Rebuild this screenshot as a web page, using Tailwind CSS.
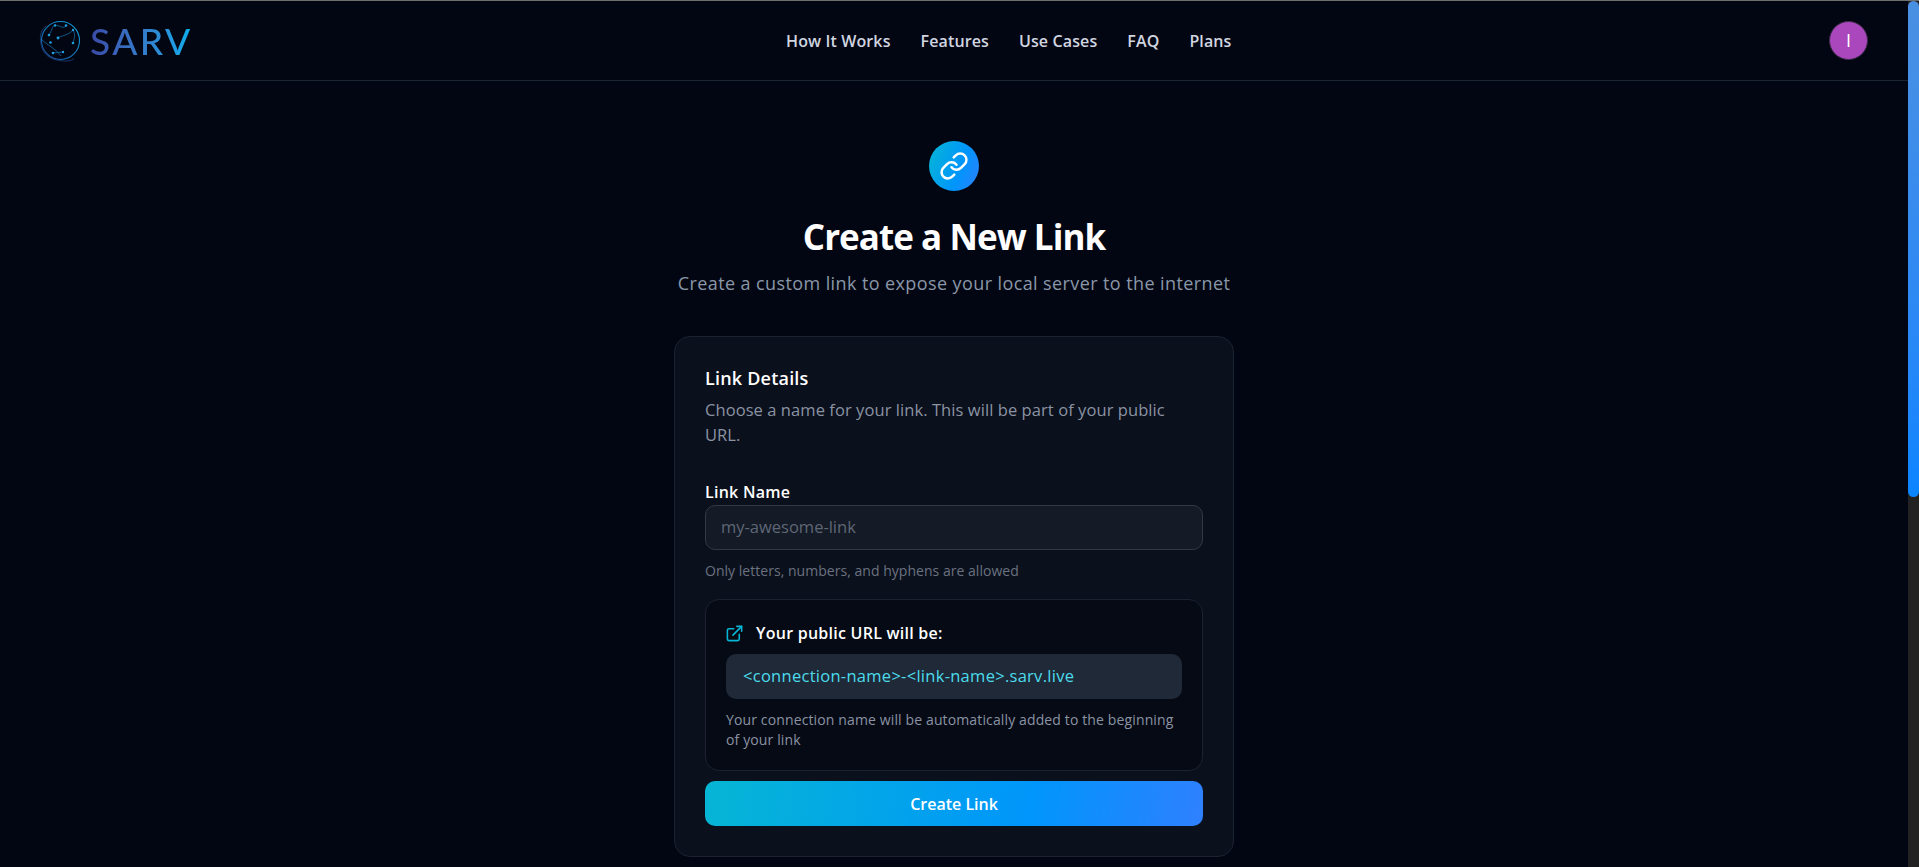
<!DOCTYPE html>
<html lang="en">
<head>
<meta charset="utf-8">
<title>SARV</title>
<script src="https://cdn.jsdelivr.net/npm/@tailwindcss/browser@4"></script>
</head>
<body class="m-0 bg-[#020612] overflow-hidden">
<div class="h-[867px] w-[1919px] flex flex-col overflow-hidden font-['Open_Sans','Noto_Sans',sans-serif]">
  <div class="h-px bg-[#6f6f6f] shrink-0"></div>
  <div class="flex flex-1 min-h-0">
    <div class="flex-1 min-w-0 flex flex-col">
      <header class="h-[80px] shrink-0 border-b border-[#1b2433] flex items-center justify-between pl-[40px] pr-[40px] relative">
        <a class="flex items-center gap-[9px]">
          <svg class="w-[42px] h-[42px] -ml-px" viewBox="0 0 42 42" fill="none">
            <defs><linearGradient id="g" x1="0" y1="1" x2="1" y2="0"><stop offset="0" stop-color="#1d4f9c"/><stop offset="1" stop-color="#0ea5e0"/></linearGradient></defs>
            <circle cx="21.5" cy="20.5" r="19" stroke="url(#g)" stroke-width="1.1"/>
            <path d="M7 6C1 10 0 18 3 28c3 9 12 13 24 13 6 0 9-2 7-3" stroke="#1d3f78" stroke-width=".8"/>
            <path d="M2 19c6 6 14 9 20 17M19 18c5-3 11-3 15-8M34 10c3 5 1 9 0 13M16 5c6 1 8 4 11 1M10 15c3-4 3-9 6-10M14 33l10-1" stroke="#1678b8" stroke-width=".7"/>
            <g fill="#1e9fe0">
              <circle cx="10" cy="15" r="1.3"/><circle cx="16" cy="5.5" r="1.2"/><circle cx="27" cy="5.5" r="1.3"/><circle cx="34" cy="10" r="1.2"/>
              <circle cx="19" cy="18" r="1.4"/><circle cx="11.500" cy="22.500" r="1.3"/><circle cx="34" cy="23" r="1.3"/><circle cx="14" cy="33" r="1.3"/><circle cx="24" cy="32" r="1.200"/>
            </g>
          </svg>
          <span class="font-['Lato',sans-serif] font-medium text-[37px] leading-none tracking-[2.5px] text-transparent bg-clip-text bg-gradient-to-r from-[#3a4aa6] to-[#00aeef]">SARV</span>
        </a>
        <nav class="absolute left-[786px] top-0 h-full flex items-center gap-[30px] text-[16px] leading-6 font-semibold text-[#d1d5e0] tracking-[0.12px] whitespace-nowrap">
          <a>How It Works</a><a>Features</a><a>Use Cases</a><a>FAQ</a><a>Plans</a>
        </nav>
        <div class="w-[39px] h-[39px] rounded-full bg-[#ab47bc] border border-[#3b2a4a] text-white flex items-center justify-center text-[18px]">I</div>
      </header>

      <main class="flex flex-col items-center">
        <div class="mt-[60px] w-[50px] h-[50px] rounded-full bg-[linear-gradient(110deg,#06b6d4,#0096fb_60%,#2f80ff)] flex items-center justify-center text-white">
          <svg class="w-[30px] h-[30px]" viewBox="0 0 24 24" fill="none" stroke="currentColor" stroke-width="2" stroke-linecap="round" stroke-linejoin="round"><path d="M10 13a5 5 0 0 0 7.540.54l3-3a5 5 0 0 0-7.070-7.070l-1.720 1.710"/><path d="M14 11a5 5 0 0 0-7.540-.54l-3 3a5 5 0 0 0 7.070 7.070l1.710-1.710"/></svg>
        </div>
        <h1 class="mt-[24px] text-[35px] leading-[44px] font-bold text-white tracking-[-0.95px] whitespace-nowrap">Create a New Link</h1>
        <p class="mt-[10px] text-[18px] leading-[28px] text-[#8a97a8] whitespace-nowrap tracking-[0.4px]">Create a custom link to expose your local server to the internet</p>

        <section class="mt-[39px] w-[560px] h-[521px] rounded-[16px] border border-[#1b2230] bg-[#0a101c] px-[30px] pt-[28px] flex flex-col">
          <h2 class="text-[18px] leading-[26px] font-semibold text-white tracking-[0.2px]">Link Details</h2>
          <p class="mt-[6px] text-[16.500px] leading-[25px] text-[#8b93a3] tracking-[0.07px]">Choose a name for your link. This will be part of your public<br>URL.</p>
          <label class="mt-[33px] text-[16px] leading-6 font-semibold text-white tracking-[0.25px]">Link Name</label>
          <div class="h-[45px] mt-[1px] rounded-[10px] border border-[#323945] bg-[#141a26] px-[15px] flex items-center text-[16.500px] text-[#5f6775]">my-awesome-link</div>
          <p class="mt-[11px] text-[14px] leading-[20px] text-[#6b7280] tracking-[0.03px]">Only letters, numbers, and hyphens are allowed</p>
          <div class="mt-[18px] h-[172px] rounded-[14px] border border-[#1c2230] bg-[#050a15] px-[20px] pt-[21px]">
            <div class="flex items-center gap-[12px] h-[24px]">
              <svg class="w-[19px] h-[19px] text-[#06b6d4] shrink-0 -ml-px" viewBox="0 0 24 24" fill="none" stroke="currentColor" stroke-width="2" stroke-linecap="round" stroke-linejoin="round"><path d="M18 13v6a2 2 0 0 1-2 2H5a2 2 0 0 1-2-2V8a2 2 0 0 1 2-2h6"/><path d="M15 3h6v6"/><path d="M10 14 21 3"/></svg>
              <span class="text-[16px] font-semibold text-white tracking-[0.25px]">Your public URL will be:</span>
            </div>
            <div class="mt-[9px] h-[45px] rounded-[10px] bg-[#1f2937] px-[17px] flex items-center text-[16.500px] text-[#4ddcec] tracking-[0.28px]">&lt;connection-name&gt;-&lt;link-name&gt;.sarv.live</div>
            <p class="mt-[11px] text-[14px] leading-[20px] text-[#8b93a3] tracking-[0.13px]">Your connection name will be automatically added to the beginning of your link</p>
          </div>
          <button class="mt-[10px] h-[45px] rounded-[10px] bg-[linear-gradient(100deg,#06b6d4,#0096fb_65%,#2f80ff)] text-white text-[16px] font-semibold">Create Link</button>
        </section>
      </main>
    </div>
    <div class="w-[11px] shrink-0 bg-[#222222] flex flex-col">
      <div class="h-[496px] rounded-[6px] bg-gradient-to-b from-[#4a90e2] to-[#0a84ff]"></div>
    </div>
  </div>
</div>
</body>
</html>
